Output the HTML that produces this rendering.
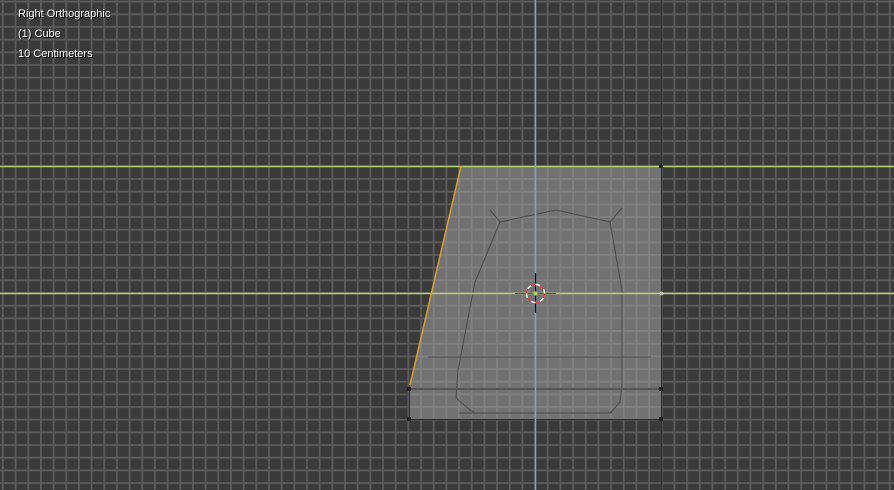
<!DOCTYPE html>
<html><head><style>
html,body{margin:0;padding:0;background:#3d3d3d;width:894px;height:490px;overflow:hidden}
.t{position:absolute;left:18px;color:#fff;font:11px "Liberation Sans",sans-serif;text-shadow:1px 1px 0 #000}
</style></head><body>
<svg width="894" height="490" style="position:absolute;left:0;top:0" xmlns="http://www.w3.org/2000/svg">
<defs>
<pattern id="g" patternUnits="userSpaceOnUse" x="2.0" y="0.7" width="12.67" height="12.67">
<rect x="0" y="0" width="1.8" height="12.67" fill="#5c5c5c"/>
<rect x="0" y="0" width="12.67" height="1.8" fill="#5c5c5c"/>
</pattern>
</defs>
<rect width="894" height="490" fill="#3a3a3a"/>
<rect width="894" height="490" fill="url(#g)"/>
<line x1="661.5" y1="0" x2="661.5" y2="490" stroke="#2a2a2a" stroke-width="1"/>
<polygon points="461,166 661,166 661,419 409,419 409,389" fill="#a0a0a0" fill-opacity="0.55"/>
<g stroke="#4a4a4a" fill="none" stroke-width="1">
<polyline points="490,210 500,222 556,210 610,222 622,208"/>
<polyline points="500,222 475,282 458,370 456,398 470,410 475,413 610,413 620,402 622,385 622,290 610,222"/>
<line x1="428" y1="357" x2="651" y2="357"/>
<line x1="459" y1="413" x2="612" y2="413"/>
</g>
<line x1="409" y1="389" x2="661" y2="389" stroke="#555" stroke-width="2"/>
<line x1="409" y1="419.5" x2="661" y2="419.5" stroke="#2a2a2a" stroke-width="1"/>
<line x1="409.5" y1="389" x2="409.5" y2="419" stroke="#2a2a2a"/>
<line x1="0" y1="166.5" x2="894" y2="166.5" stroke="#b8d06a" stroke-width="1.5"/>
<line x1="0" y1="293.5" x2="894" y2="293.5" stroke="#b8d06a" stroke-width="1.5"/>
<line x1="535.5" y1="0" x2="535.5" y2="490" stroke="#7fa3c8" stroke-width="1.5"/>
<line x1="461" y1="166" x2="410" y2="385" stroke="#d8a030" stroke-width="1.5"/>
<g fill="#222"><rect x="407" y="387" width="4" height="4"/><rect x="407" y="417" width="4" height="4"/><rect x="659" y="417" width="4" height="4"/><rect x="659" y="387" width="4" height="4"/><rect x="659" y="165" width="4" height="3"/></g>
<circle cx="661.5" cy="293.5" r="1.5" fill="none" stroke="#ddd" stroke-width="0.8"/>
<line x1="535.5" y1="273" x2="535.5" y2="313" stroke="#111" stroke-width="1.3"/>
<line x1="515" y1="293.5" x2="556" y2="293.5" stroke="#555" stroke-width="1"/>
<circle cx="535.5" cy="293.5" r="9" fill="none" stroke="#fff" stroke-width="1.4"/>
<circle cx="535.5" cy="293.5" r="9" fill="none" stroke="#e03030" stroke-width="1.4" stroke-dasharray="4.7 4.7"/>
<circle cx="535.5" cy="293.5" r="2" fill="#b8d06a"/>
</svg>
<div class="t" style="top:8px">Right Orthographic</div>
<div class="t" style="top:28px">(1) Cube</div>
<div class="t" style="top:48px">10 Centimeters</div>
</body></html>
